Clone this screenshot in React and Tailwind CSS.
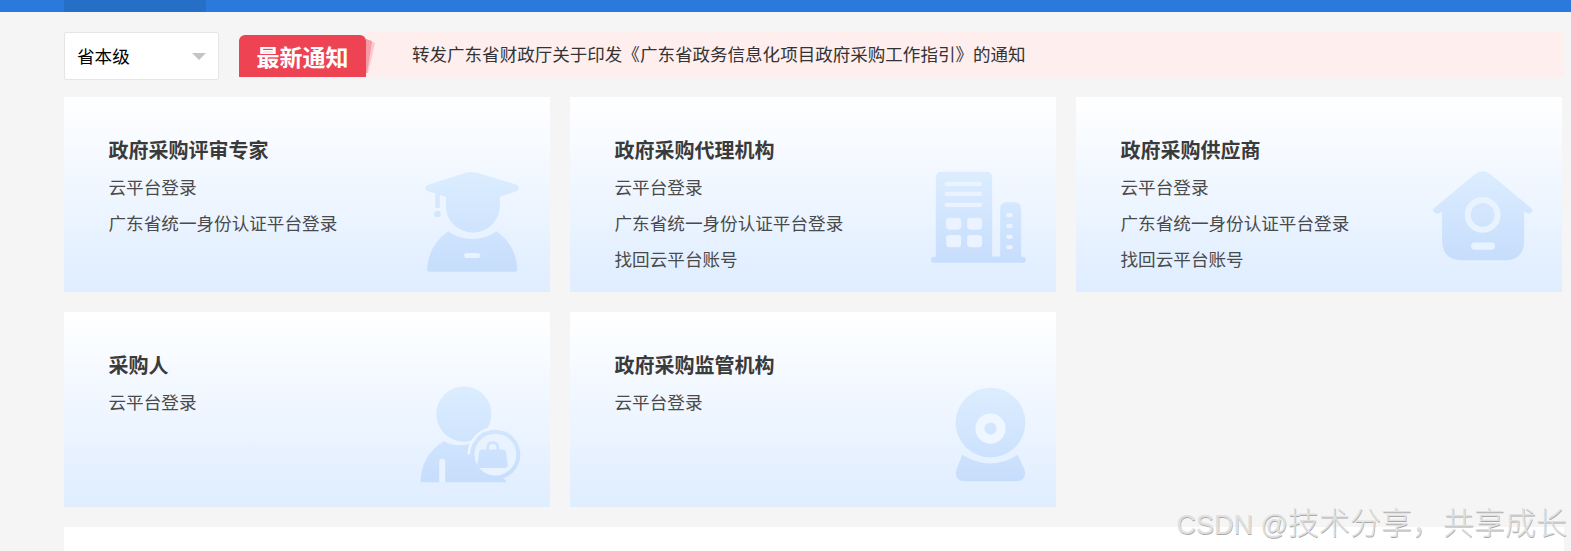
import React from 'react';

const cardFont = { fontFamily: '"Noto Sans CJK SC", "Liberation Sans", sans-serif' };

const Grad = ({ id, y1, y2 }) => (
  <defs>
    <linearGradient id={id} gradientUnits="userSpaceOnUse" x1="0" x2="0" y1={y1} y2={y2}>
      <stop offset="0" stopColor="#dcedff" />
      <stop offset="1" stopColor="#c6ddfc" />
    </linearGradient>
  </defs>
);

// viewBoxes are 3x pixels, taken from the crop of each card corner
const CapIcon = () => (
  <svg viewBox="60 25 310 315" className="absolute right-[26px] bottom-[18px] w-[105px] h-[105px]">
    <Grad id="cap" y1="30" y2="335" />
    <g fill="url(#cap)">
      <path d="M85 72 L195 37 Q215 31 235 37 L350 72 Q366 81 350 92 L300 108 V135 A81 81 0 0 1 138 135 V108 L85 92 Q66 82 85 72Z" />
      <rect x="106" y="98" width="14" height="44" rx="3" />
      <circle cx="113" cy="160" r="10" />
      <path d="M145 212 Q175 235 218 235 Q260 235 290 212 Q350 255 352 325 Q352 333 345 333 H90 Q82 333 82 325 Q85 255 145 212Z" />
    </g>
    <rect x="193" y="277" width="48" height="15" rx="7" fill="#e9f3ff" />
  </svg>
);

const BuildingIcon = () => (
  <svg viewBox="60 25 290 285" className="absolute right-[29px] bottom-[28px] w-[97px] h-[95px]">
    <Grad id="bld" y1="33" y2="306" />
    <g fill="url(#bld)">
      <path d="M77 290 V50 Q77 33 94 33 H229 Q246 33 246 50 V290Z" />
      <path d="M270 290 V145 Q270 125 290 125 H313 Q333 125 333 145 V290Z" />
      <path d="M240 288 H270 V292 H240Z" />
      <rect x="63" y="288" width="284" height="18" rx="8" />
    </g>
    <g fill="#eaf3ff">
      <rect x="103" y="63" width="113" height="13" rx="6" />
      <rect x="103" y="93" width="113" height="13" rx="6" />
      <rect x="103" y="126" width="113" height="13" rx="6" />
      <rect x="108" y="171" width="45" height="36" rx="10" />
      <rect x="171" y="171" width="45" height="36" rx="10" />
      <rect x="108" y="223" width="45" height="37" rx="10" />
      <rect x="171" y="223" width="45" height="37" rx="10" />
      <rect x="288" y="157" width="20" height="13" rx="6" />
      <rect x="288" y="190" width="20" height="12" rx="6" />
      <rect x="288" y="222" width="20" height="12" rx="6" />
      <rect x="288" y="254" width="20" height="12" rx="6" />
    </g>
  </svg>
);

const HouseIcon = () => (
  <svg viewBox="60 25 315 280" className="absolute right-[26px] bottom-[30px] w-[105px] h-[93px]">
    <Grad id="house" y1="33" y2="300" />
    <path
      fill="url(#house)"
      d="M190 42 Q215 22 240 42 L360 142 Q371 152 358 158 Q350 162 340 152 V240 Q340 300 280 300 H155 Q93 300 93 240 V152 Q82 162 73 158 Q60 150 70 142Z"
    />
    <circle cx="215" cy="163" r="45" fill="none" stroke="#e9f3ff" strokeWidth="18" />
    <rect x="180" y="246" width="72" height="22" rx="11" fill="#e9f3ff" />
  </svg>
);

const BuyerIcon = () => (
  <svg viewBox="55 40 310 300" className="absolute right-[28px] bottom-[23px] w-[103px] h-[100px]">
    <Grad id="buyer" y1="47" y2="335" />
    <circle cx="190" cy="130" r="83" fill="url(#buyer)" />
    <path fill="url(#buyer)" d="M60 335 Q60 255 130 212 Q165 232 215 218 L320 335Z" />
    {/* gap between head and the bag badge */}
    <path fill="none" stroke="#eef5ff" strokeWidth="8" d="M205 252 A80 80 0 0 1 285 172" />
    <circle cx="285" cy="252" r="75" fill="url(#buyer)" />
    <circle cx="285" cy="252" r="63" fill="#e9f3ff" />
    <path fill="#e9f3ff" d="M116 335 V273 Q116 264 125 264 Q134 264 134 273 V335Z" />
    <path fill="url(#buyer)" d="M245 237 H308 Q316 237 317 245 L322 282 Q323 292 313 292 H240 Q230 292 231 282 L236 245 Q237 237 245 237Z" />
    <path fill="none" stroke="url(#buyer)" strokeWidth="8" d="M262 238 V230 Q262 216 277 216 Q292 216 292 230 V238" />
  </svg>
);

const CameraIcon = () => (
  <svg viewBox="100 45 220 292" className="absolute right-[29px] bottom-[24px] w-[73px] h-[97px]">
    <Grad id="cam" y1="50" y2="332" />
    <circle cx="210" cy="155" r="105" fill="url(#cam)" />
    <circle cx="210" cy="173" r="32" fill="none" stroke="#eef6ff" strokeWidth="27" />
    <path fill="url(#cam)" d="M125 252 Q210 305 292 252 L312 295 Q322 332 285 332 H135 Q98 332 108 295Z" />
  </svg>
);

const cards = [
  { title: '政府采购评审专家', links: ['云平台登录', '广东省统一身份认证平台登录'], icon: <CapIcon /> },
  { title: '政府采购代理机构', links: ['云平台登录', '广东省统一身份认证平台登录', '找回云平台账号'], icon: <BuildingIcon /> },
  { title: '政府采购供应商', links: ['云平台登录', '广东省统一身份认证平台登录', '找回云平台账号'], icon: <HouseIcon /> },
  { title: '采购人', links: ['云平台登录'], icon: <BuyerIcon /> },
  { title: '政府采购监管机构', links: ['云平台登录'], icon: <CameraIcon /> },
];

const Card = ({ title, links, icon }) => (
  <div className="relative h-[195px] bg-gradient-to-b from-white to-[#dfedff] pl-[44.5px] pt-[35px] overflow-hidden">
    <h3 className="text-[20px] leading-9 font-bold text-[#3a3a3a]">{title}</h3>
    <ul className="mt-px">
      {links.map((link) => (
        <li key={link} className="text-[17.6px] leading-9 text-[#4a4a4a]">{link}</li>
      ))}
    </ul>
    {icon}
  </div>
);

export default function App() {
  return (
    <div className="relative h-[551px] overflow-hidden bg-[#f5f5f5]" style={cardFont}>
      {/* top nav strip */}
      <div className="h-3 bg-[#2a7ade] pl-16">
        <div className="h-3 w-[142px] bg-[#2570c6]" />
      </div>

      <div className="ml-16 w-[1500px]">
        {/* region select + notice */}
        <div className="mt-5 flex items-start gap-5">
          <div className="flex h-[48px] w-[155px] items-center justify-between rounded-[2px] border border-[#e5e5e5] bg-white pl-3 pr-3">
            <span className="text-[17.6px] text-black">省本级</span>
            <span className="h-0 w-0 border-x-[7px] border-t-[7px] border-x-transparent border-t-[#c4c4c4]" />
          </div>
          <div className="flex h-[45px] flex-1">
            <div className="mt-[3px] flex h-[42px] w-[127px] items-center justify-center rounded-t-[6px] bg-[#ee4353] text-[23px] font-bold text-white">
              最新通知
            </div>
            <div className="relative flex flex-1 items-center bg-[#ffeeee] pl-[46px] text-[17.55px] text-[#333]">
              <svg viewBox="0 0 9 34" className="absolute left-0 top-[7px] h-[34px] w-[9px]">
                <path d="M0 0 L9 4 L2 34 L0 34Z" fill="#fbc6cc" />
                <path d="M0 0 L6 2 L1 34 L0 34Z" fill="#f69aa5" />
              </svg>
              转发广东省财政厅关于印发《广东省政务信息化项目政府采购工作指引》的通知
            </div>
          </div>
        </div>

        {/* login cards */}
        <div className="mt-[17px] grid w-[1498px] grid-cols-3 gap-5">
          {cards.map((card) => (
            <Card key={card.title} {...card} />
          ))}
        </div>

        <div className="mt-5 h-[30px] bg-white" />
      </div>

      {/* watermark */}
      <div
        className="absolute bottom-[8px] right-[4px] flex items-baseline whitespace-nowrap font-light leading-9 text-[#e0e0e0] [text-shadow:0.5px_0.5px_0.5px_#aaaaaa]"
        style={{ fontFamily: '"Liberation Sans", "Noto Sans CJK SC", sans-serif' }}
      >
        <span className="text-[27px] whitespace-pre">CSDN @</span>
        <span className="text-[31px]">技术分享，共享成长</span>
      </div>
    </div>
  );
}
